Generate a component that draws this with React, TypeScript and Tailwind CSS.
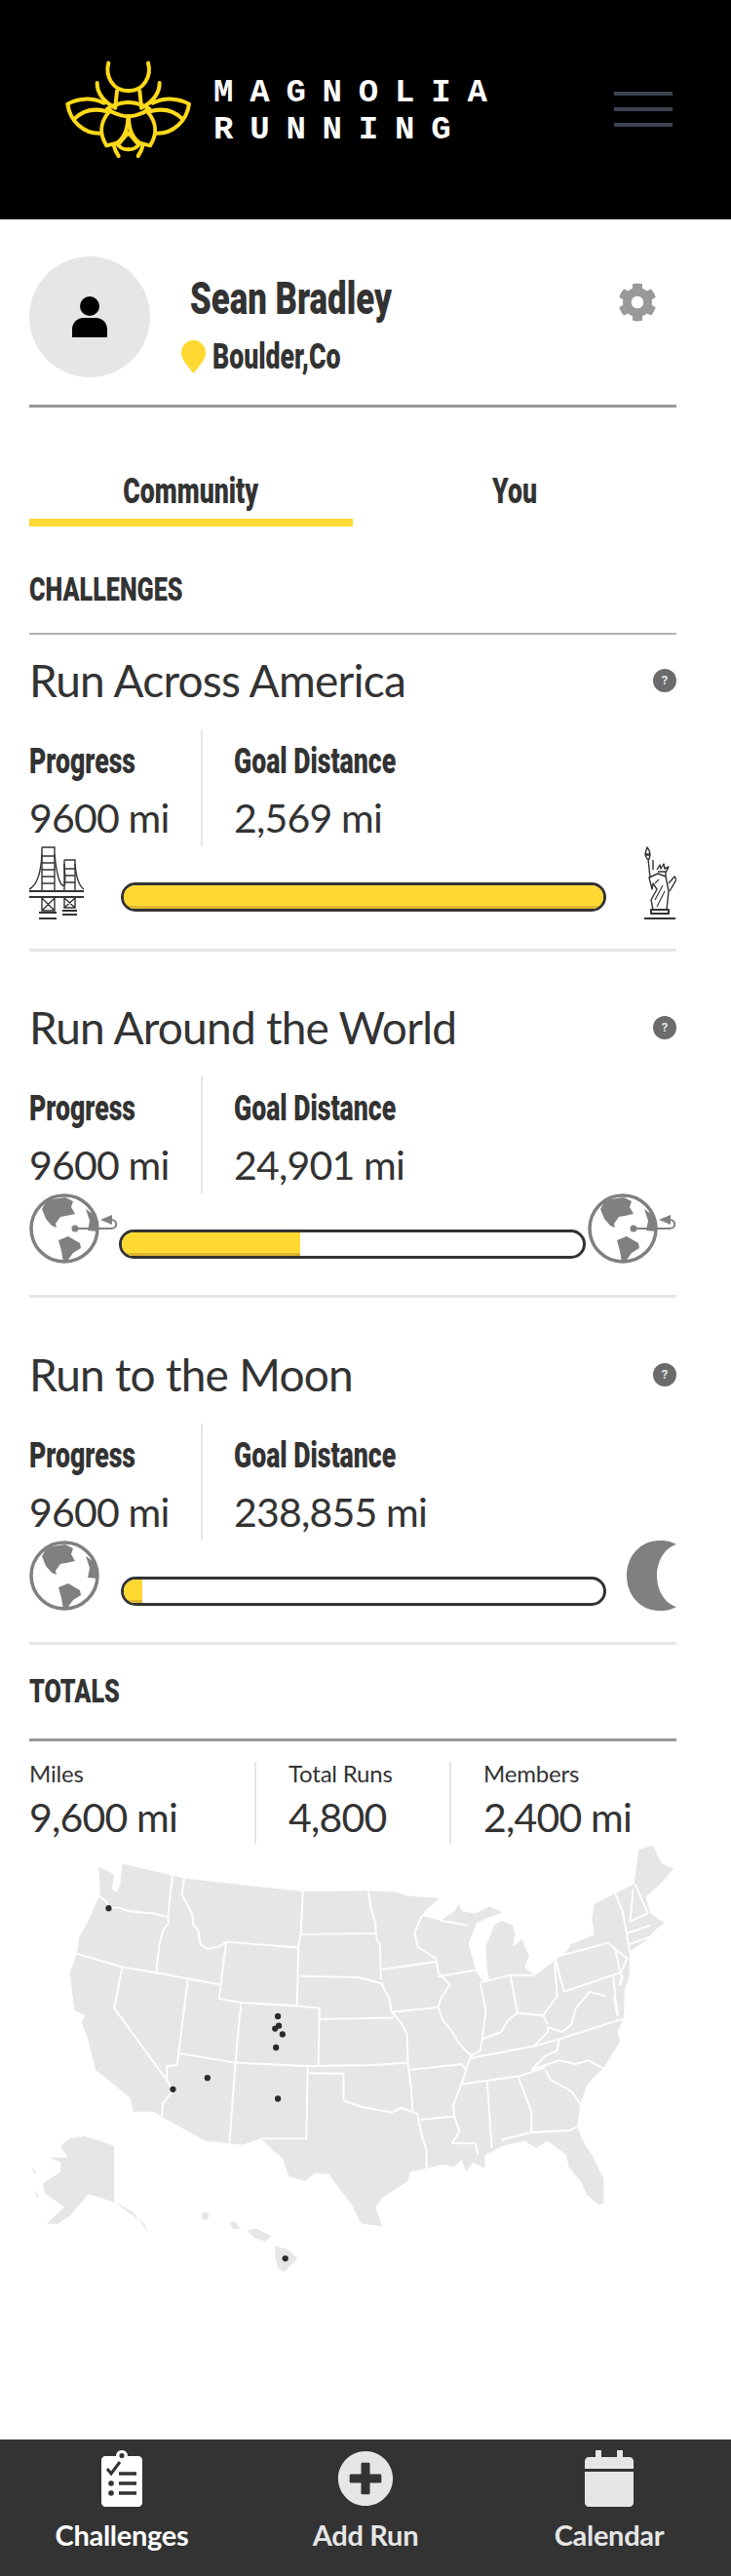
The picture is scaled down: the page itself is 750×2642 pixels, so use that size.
import { FaCog, FaPlusCircle } from "react-icons/fa";

const HEAD = "font-['Roboto',sans-serif] font-black text-[#333]";

function Logo() {
  const half = (
    <>
      <path d="M214 74 C203 112 226 160 275 160" />
      <path d="M179 135 C178 165 200 195 235 212" />
      <path d="M240 160 L235 208" />
      <path d="M210 215 C240 195 275 195 275 195 M210 215 C240 238 275 238 275 238" />
      <path d="M200 197 C160 178 118 183 88 200 C95 250 135 292 190 290" />
      <path d="M110 245 C135 220 170 213 205 222" />
      <path d="M215 225 C183 262 190 300 208 328 L240 320 C262 305 274 275 274 238" />
      <path d="M240 320 C250 340 265 340 275 340 M275 290 C262 300 255 312 246 322" />
      <path d="M230 325 C232 338 238 350 245 360" />
    </>
  );
  return (
    <svg width="200" height="140" viewBox="0 0 600 420" fill="none" stroke="#ffd91a" strokeWidth="12" strokeLinecap="round" strokeLinejoin="round">
      {half}
      <g transform="translate(550 0) scale(-1 1)">{half}</g>
    </svg>
  );
}

function Bridge() {
  return (
    <svg width="56" height="75" viewBox="0 0 56 75" fill="none" stroke="#333" strokeWidth="1.4">
      <path d="M13 1 H26 V45 M13 1 V45 M13 10 H26 M13 17 H26 M13 24 H26 M13 31 H26 M13 38 H26" />
      <path d="M36 14 H47 V45 M36 14 V45 M36 23 H47 M36 30 H47 M36 37 H47" />
      <path d="M0 44 C8 40 12 28 13 8 M26 8 C28 30 32 42 36 40 C38 35 36 25 36 18 M47 18 C48 30 50 40 56 44" />
      <path d="M0 46 H56 M0 52 H56" strokeWidth="2" />
      <path d="M13 53 V66 H26 V53 M13 53 L26 66 M26 53 L13 66 M36 53 V63 H47 V53 M36 53 L47 63 M47 53 L36 63" />
      <path d="M10 68 H28 M10 74 H28 M34 66 H49 M34 70 H49" strokeWidth="2" />
    </svg>
  );
}

function Statue() {
  return (
    <svg width="34" height="75" viewBox="0 0 34 75" fill="none" stroke="#333" strokeWidth="1.4" strokeLinejoin="round">
      <path d="M4 1 L6 4 L7 8 H2 L3 4 Z M2 9 H7 L6 13 H4 Z" />
      <path d="M5 13 L7 32 M10 14 V24" />
      <path d="M14 24 L17 19 L18 23 L21 18 L22 23 L26 21 L23 27 M15 26 H23 V31" />
      <path d="M6 32 L15 28 L23 31 L26 46 L24 65 H10 L8 55 L14 44 L10 38 L9 44 Z" />
      <path d="M12 38 L16 34 M12 55 L20 40 M14 62 L22 46" strokeWidth="1.1" />
      <path d="M26 38 L32 31 L34 34 L27 46" />
      <path d="M8 65 H26 V69 H8 Z M1 74 H33" strokeWidth="2" />
    </svg>
  );
}

function Globe({ arrow }: { arrow?: boolean }) {
  return (
    <svg width={arrow ? 91 : 72} height="72" viewBox={arrow ? "0 0 91 72" : "0 0 72 72"} fill="none">
      <circle cx="36" cy="36" r="34" stroke="#808080" strokeWidth="3.5" />
      <path d="M23 6 L37 4 L45 8 L43 14 L47 21 L38 23 L32 24 L27 31 L28 35 L23 33 L17 26 L13 16 L17 9 Z" fill="#808080" />
      <path d="M30 48 L40 44 L52 51 L53 56 L45 61 L40 68 L35 71 L33 59 Z" fill="#808080" />
      <path d="M58 16 L65 21 L71 33 L70 39 L60 38 L62 28 Z" fill="#808080" />
      {arrow ? (
        <>
          <circle cx="47" cy="36" r="3.5" fill="#808080" />
          <path d="M47 36 H84 C91 36 91 27 84 27 H78" stroke="#808080" strokeWidth="2" />
          <path d="M73 27 L85 22 L85 32 Z" fill="#808080" />
        </>
      ) : null}
    </svg>
  );
}

function Moon() {
  return (
    <svg width="51" height="72" viewBox="0 0 51 72">
      <path d="M51 4 C44 0 38 0 34 0 C14 0 0 16 0 36 C0 56 14 72 34 72 C38 72 44 72 51 68 C38 64 31 50 31 36 C31 22 38 8 51 4 Z" fill="#808080" />
    </svg>
  );
}

function Help() {
  return (
    <div className="flex h-[24px] w-[24px] items-center justify-center rounded-full bg-[#6b6b6b] font-['Roboto',sans-serif] text-[13px] font-bold text-[#e6e6e6]">
      ?
    </div>
  );
}

function Challenge(props: {
  title: string;
  goal: string;
  fill: string;
  left: React.ReactNode;
  right: React.ReactNode;
  barClass: string;
  topClass: string;
  rowClass: string;
  bottomClass: string;
}) {
  return (
    <section className={`border-b-[3px] border-[#e6e6e6] ${props.topClass} ${props.bottomClass}`}>
      <div className="flex h-[50px] items-center justify-between">
        <h3 className="text-[46px] leading-none tracking-[-0.75px] text-[#333]">{props.title}</h3>
        <Help />
      </div>
      <div className="mt-[25px] flex h-[120px]">
        <div className="w-[178px] border-r-2 border-[#e6e6e6]">
          <div className="mt-[18px] h-[30px]">
            <span className={`${HEAD} inline-block origin-left scale-x-[0.74] text-[36px] leading-[30px]`}>Progress</span>
          </div>
          <div className="mt-[18px] text-[41px] leading-[50px] tracking-[-0.8px] text-[#333]">9600 mi</div>
        </div>
        <div className="pl-[32px]">
          <div className="mt-[18px] h-[30px] whitespace-nowrap">
            <span className={`${HEAD} inline-block origin-left scale-x-[0.74] text-[36px] leading-[30px]`}>Goal Distance</span>
          </div>
          <div className="mt-[18px] text-[41px] leading-[50px] tracking-[-0.8px] text-[#333]">{props.goal}</div>
        </div>
      </div>
      <div className={`flex items-start ${props.rowClass}`}>
        {props.left}
        <div className={`relative mt-[37px] h-[30px] flex-1 overflow-hidden rounded-full border-[3px] border-[#333] bg-white ${props.barClass}`}>
          <div className={`h-full border-b-[3px] border-[#e0b82f] bg-[#ffd932] ${props.fill}`} />
        </div>
        {props.right}
      </div>
    </section>
  );
}

function UsMap() {
  const lines = [
    "M212 132 L228 145 L232 158 L255 158 L275 165 L330 170 L360 178",
    "M370 90 L360 178 L362 190 L350 205 L342 235 L335 295",
    "M165 255 L262 283 L335 295 L470 320",
    "M262 283 L245 370 L360 525 L370 545 L350 570 L347 598",
    "M403 310 L383 465 L380 490 L358 492 L358 525",
    "M383 465 L505 485 L660 492 L800 490 L875 485",
    "M517 358 L505 485 L492 655",
    "M485 230 L640 242 L637 365 L517 358 L470 350 L485 230",
    "M395 96 L390 130 L412 170 L415 195 L425 205 L430 235 L445 245 L470 240 L485 230",
    "M650 124 L645 212 L640 242",
    "M645 214 L805 212",
    "M790 122 L795 155 L805 190 L808 225 L815 235 L817 310",
    "M640 302 L770 305 L790 310 L817 318",
    "M637 365 L685 370 L685 393 L845 390",
    "M685 370 L683 490",
    "M817 315 L835 350 L840 378 L860 400 L873 425 L875 485 L882 540 L885 585",
    "M820 288 L935 272",
    "M842 378 L940 368",
    "M945 138 L920 160 L903 178 L890 210 L895 240 L935 265 L940 295 L965 320 L945 350 L940 368 L950 395 L970 420 L985 445 L1010 470",
    "M940 303 L1020 290",
    "M945 185 L1003 195",
    "M1030 315 L1042 375 L1035 430 L1030 460 L1010 470",
    "M1095 300 L1110 380",
    "M1035 435 L1075 420 L1090 395 L1110 380 L1165 385 L1175 405",
    "M1165 385 L1195 345 L1190 275",
    "M1190 262 L1305 232 L1320 245 L1330 295 L1210 335 L1190 262",
    "M1010 475 L1145 450 L1200 435 L1338 392",
    "M1145 450 L1175 420 L1175 410 L1205 420 L1225 405 L1235 370 L1265 335 L1300 345",
    "M1140 500 L1170 490 L1200 480 L1235 488 L1262 480 L1295 498",
    "M1200 435 L1195 460 L1170 470 L1140 500",
    "M990 530 L1115 513 L1170 495",
    "M1170 500 L1180 520 L1225 545 L1245 572",
    "M1112 515 L1140 590 L1140 632",
    "M1045 525 L1055 665",
    "M1075 648 L1140 632 L1222 628 L1238 620",
    "M880 500 L990 488 L1000 500 L990 530 L972 575 L975 598 L902 605",
    "M662 507 L737 508 L737 565 L775 578 L840 590 L860 580 L895 592 L905 640 L915 670 L915 708",
    "M660 492 L657 645 L560 645",
    "M975 598 L985 630 L970 655 L1020 655 L1025 680",
    "M1010 470 L990 530",
    "M1320 128 L1335 165 L1345 215 L1350 250",
    "M1358 118 L1352 185",
    "M1362 108 L1390 170",
    "M1348 188 L1390 170",
    "M1345 212 L1395 195",
    "M1350 235 L1392 220",
    "M1320 245 L1345 265 L1330 300",
    "M1315 300 L1320 345",
    "M1032 315 L1095 300 L1148 300",
  ];
  const dots = [
    [233, 159],
    [596, 387],
    [598, 407],
    [590, 413],
    [606, 425],
    [592, 453],
    [445, 517],
    [371, 541],
    [596, 561],
    [612, 898],
  ];
  return (
    <svg className="mt-[1px] block h-[610px] w-[750px]" viewBox="0 25 1568 1255" preserveAspectRatio="none">
      <path
        fill="#e6e6e6"
        d="M212 72 L245 88 L240 118 L250 125 L258 108 L262 65 L370 90 L395 96 L650 124 L790 122 L850 125 L875 133 L945 138 L925 155 L905 175 L925 180 L945 185 L975 165 L985 150 L990 165 L1020 170 L1050 155 L1078 168 L1045 180 L1022 190 L1005 235 L1015 270 L1022 295 L1035 312 L1050 310 L1045 290 L1042 240 L1060 195 L1075 185 L1100 195 L1105 215 L1100 240 L1120 225 L1135 260 L1125 285 L1148 300 L1190 270 L1215 250 L1225 235 L1275 215 L1270 180 L1275 150 L1320 128 L1360 108 L1370 35 L1400 27 L1420 65 L1445 75 L1415 110 L1385 135 L1395 170 L1425 190 L1405 205 L1385 228 L1350 250 L1350 300 L1340 330 L1338 390 L1325 420 L1330 440 L1295 495 L1260 530 L1245 570 L1238 620 L1250 650 L1270 680 L1295 730 L1295 780 L1285 785 L1260 765 L1245 735 L1220 705 L1215 680 L1175 650 L1150 665 L1125 650 L1080 660 L1040 680 L1040 708 L1015 695 L1000 715 L990 690 L975 705 L950 700 L915 708 L880 715 L875 735 L820 770 L805 790 L820 830 L775 825 L755 785 L735 760 L705 720 L675 718 L655 735 L620 725 L605 685 L585 670 L560 645 L520 658 L440 650 L345 598 L330 588 L285 588 L280 560 L255 540 L225 515 L205 500 L190 440 L175 400 L183 385 L160 375 L155 340 L150 295 L165 255 L170 220 L190 185 L205 150 L215 130 Z"
      />
      <path
        fill="#e6e6e6"
        d="M245 660 L245 780 L215 770 L190 762 L165 790 L150 808 L125 825 L100 825 L138 790 L110 770 L95 760 L92 740 L130 715 L130 695 L105 685 L145 685 L130 660 L150 645 L180 640 L215 650 Z M245 778 L285 800 L320 845 L310 825 L275 800 Z M68 706 L78 718 L72 718 Z M75 755 L85 770 L78 768 Z"
      />
      <path fill="#e6e6e6" d="M590 872 L615 878 L638 898 L610 927 L597 920 L590 895 Z M530 838 L550 835 L582 850 L570 862 L545 855 Z M492 822 L505 820 L515 836 L500 835 Z" />
      <circle cx="440" cy="808" r="8" fill="#e6e6e6" />
      {lines.map((d) => (
        <path key={d} d={d} fill="none" stroke="#fff" strokeWidth="4" strokeLinejoin="round" />
      ))}
      <path d="M1318 345 L1325 385 M1335 300 L1330 322" fill="none" stroke="#fff" strokeWidth="6" />
      {dots.map(([cx, cy]) => (
        <circle key={`${cx}-${cy}`} cx={cx} cy={cy} r="6.5" fill="#2b2b2b" />
      ))}
    </svg>
  );
}

export default function App() {
  return (
    <div className="flex min-h-[2642px] w-full flex-col bg-white font-['Lato',sans-serif]">
      {/* Header */}
      <header className="relative flex h-[225px] items-start bg-black pl-[40px] pt-[40px]">
        <Logo />
        <div className="ml-[-21px] mt-[36px] font-['Liberation_Mono',monospace] text-[34px] font-bold leading-[38px] tracking-[16.8px] text-white">
          <div>MAGNOLIA</div>
          <div>RUNNING</div>
        </div>
        <div className="absolute left-[630px] top-[94px] flex w-[60px] flex-col gap-[12px]">
          <div className="h-[4px] bg-[#3d4350]" />
          <div className="h-[4px] bg-[#3d4350]" />
          <div className="h-[4px] bg-[#3d4350]" />
        </div>
      </header>

      <main className="pl-[30px] pr-[56px]">
        {/* Profile */}
        <div className="relative flex h-[193px] items-start border-b-[3px] border-[#999] pt-[38px]">
          <div className="flex h-[124px] w-[124px] items-center justify-center rounded-full bg-[#e6e6e6]">
            <svg width="36" height="42" viewBox="0 0 36 42" fill="#000">
              <ellipse cx="18" cy="10" rx="10" ry="10" />
              <path d="M0 42 V34 C0 26 6 22 12 22 H24 C30 22 36 26 36 34 V42 Z" />
            </svg>
          </div>
          <div className="ml-[32px]">
            <div className="ml-[9px] mt-[21px] h-[44px]">
              <span className={`${HEAD} inline-block origin-left scale-x-[0.74] whitespace-nowrap text-[47px] leading-[44px]`}>Sean Bradley</span>
            </div>
            <div className="mt-[21px] flex items-center gap-[7px]">
              <svg width="25" height="34" viewBox="0 0 25 34">
                <path d="M12.5 0 C20 0 25 6 25 13 C25 20 17 28 12.5 34 C8 28 0 20 0 13 C0 6 5 0 12.5 0 Z" fill="#ffd932" />
              </svg>
              <span className={`${HEAD} inline-block origin-left scale-x-[0.74] whitespace-nowrap text-[36px] leading-[34px]`}>Boulder,Co</span>
            </div>
          </div>
          <FaCog className="absolute left-[604px] top-[65px] h-[40px] w-[40px] text-[#999]" />
        </div>

        {/* Tabs */}
        <div className="mt-[66px] grid h-[56px] grid-cols-2">
          <div className="flex justify-center border-b-[8px] border-[#ffd932] pb-[8px]">
            <span className={`${HEAD} inline-block scale-x-[0.74] text-[36px] leading-[40px]`}>Community</span>
          </div>
          <div className="flex justify-center pb-[8px]">
            <span className={`${HEAD} inline-block scale-x-[0.74] text-[36px] leading-[40px]`}>You</span>
          </div>
        </div>

        {/* Challenges */}
        <div className="h-[111px] border-b-[2px] border-[#b3b3b3] pt-[44px]">
          <span className={`${HEAD} inline-block origin-left scale-x-[0.74] text-[34px] leading-[40px]`}>CHALLENGES</span>
        </div>

        <Challenge
          title="Run Across America"
          goal="2,569 mi"
          fill="w-full"
          left={<Bridge />}
          right={<Statue />}
          barClass="mx-[38px]"
          topClass="pt-[22px]"
          rowClass="h-[75px]"
          bottomClass="pb-[30px]"
        />
        <Challenge
          title="Run Around the World"
          goal="24,901 mi"
          fill="w-[183px]"
          left={<Globe arrow />}
          right={<Globe arrow />}
          barClass="ml-[1px] mr-[2px]"
          topClass="pt-[53px]"
          rowClass="h-[72px]"
          bottomClass="pb-[32px]"
        />
        <Challenge
          title="Run to the Moon"
          goal="238,855 mi"
          fill="w-[19px]"
          left={<Globe />}
          right={<Moon />}
          barClass="ml-[22px] mr-[21px]"
          topClass="pt-[54px]"
          rowClass="h-[72px]"
          bottomClass="pb-[32px]"
        />

        {/* Totals */}
        <div className="h-[99px] border-b-[3px] border-[#999] pt-[27px]">
          <span className={`${HEAD} inline-block origin-left scale-x-[0.74] text-[34px] leading-[40px]`}>TOTALS</span>
        </div>
        <div className="mt-[21px] flex h-[84px]">
          <div className="w-[233px] border-r-2 border-[#e6e6e6]">
            <div className="mt-[-2px] text-[24px] leading-[28px] tracking-[-0.2px] text-[#333]">Miles</div>
            <div className="mt-[5px] text-[41px] leading-[52px] tracking-[-0.8px] text-[#333]">9,600 mi</div>
          </div>
          <div className="w-[200px] border-r-2 border-[#e6e6e6] pl-[33px]">
            <div className="mt-[-2px] text-[24px] leading-[28px] tracking-[-0.2px] text-[#333]">Total Runs</div>
            <div className="mt-[5px] text-[41px] leading-[52px] tracking-[-0.8px] text-[#333]">4,800</div>
          </div>
          <div className="pl-[33px]">
            <div className="mt-[-2px] text-[24px] leading-[28px] tracking-[-0.2px] text-[#333]">Members</div>
            <div className="mt-[5px] whitespace-nowrap text-[41px] leading-[52px] tracking-[-0.8px] text-[#333]">2,400 mi</div>
          </div>
        </div>
      </main>

      <UsMap />

      {/* Bottom nav */}
      <nav className="mt-auto grid h-[140px] grid-cols-3 bg-[#333] pt-[11px] text-center text-[29px] font-bold leading-[36px] tracking-[-0.3px]">
        <div className="flex flex-col items-center text-white">
          <svg width="42" height="58" viewBox="0 0 42 58">
            <path
              fill="#fff"
              fillRule="evenodd"
              d="M21 0 C25 0 27 3 27 6 H38 C40 6 42 8 42 10 V54 C42 56 40 58 38 58 H4 C2 58 0 56 0 54 V10 C0 8 2 6 4 6 H15 C15 3 17 0 21 0 Z M21 3 A2.6 2.6 0 1 0 21.01 8.2 A2.6 2.6 0 1 0 21 3 Z"
            />
            <path d="M6 19 L10 24 L19 12" fill="none" stroke="#333" strokeWidth="3" />
            <path d="M18 24 H36 M18 34 H36 M18 44 H36" stroke="#333" strokeWidth="3.5" />
            <circle cx="10" cy="34" r="2.8" fill="#333" />
            <circle cx="10" cy="44" r="2.8" fill="#333" />
          </svg>
          <span className="mt-[11px]">Challenges</span>
        </div>
        <div className="flex flex-col items-center text-[#e6e6e6]">
          <FaPlusCircle className="h-[58px] w-[58px]" />
          <span className="mt-[11px]">Add Run</span>
        </div>
        <div className="flex flex-col items-center text-[#e6e6e6]">
          <svg width="50" height="58" viewBox="0 0 50 58" fill="#e6e6e6">
            <path d="M11 0 H17 V7 H33 V0 H39 V7 H46 C48 7 50 9 50 11 V19 H0 V11 C0 9 2 7 4 7 H11 Z" />
            <path d="M0 22 H50 V54 C50 56 48 58 46 58 H4 C2 58 0 56 0 54 Z" />
          </svg>
          <span className="mt-[11px]">Calendar</span>
        </div>
      </nav>
    </div>
  );
}
